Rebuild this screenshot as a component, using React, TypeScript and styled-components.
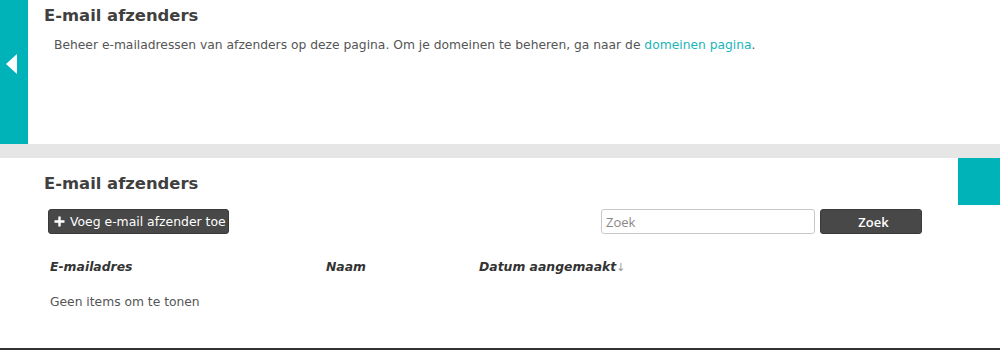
import React from 'react'
import styled, { createGlobalStyle } from 'styled-components'

const GlobalStyle = createGlobalStyle`
  html, body {
    margin: 0;
    padding: 0;
    background: #fff;
  }
  body {
    font-family: "DejaVu Sans", Verdana, sans-serif;
    color: #444;
  }
`

const Page = styled.div`
  width: 1000px;
  height: 350px;
  display: flex;
  flex-direction: column;
  overflow: hidden;
  background: #fff;
  border-bottom: 2px solid #333;
  box-sizing: border-box;
`

const TopPanel = styled.section`
  height: 144px;
  display: flex;
`

const SideTab = styled.div`
  width: 28px;
  flex: none;
  background: #00b3b8;
  display: flex;
  align-items: center;
  justify-content: flex-start;
  padding-left: 6px;
  padding-bottom: 16px;
  box-sizing: border-box;
`

const Arrow = styled.span`
  width: 0;
  height: 0;
  border-top: 10px solid transparent;
  border-bottom: 10px solid transparent;
  border-right: 11px solid #fff;
`

const TopBody = styled.div`
  padding: 6px 0 0 16px;
`

const Title = styled.h2`
  margin: 0;
  font-size: 16.4px;
  font-weight: bold;
  color: #404040;
  line-height: 20px;
`

const Intro = styled.p`
  margin: 11px 0 0 10px;
  font-size: 12.3px;
  color: #555;
  line-height: 16px;
`

const Link = styled.a`
  color: #22b5b8;
  text-decoration: none;
`

const Divider = styled.div`
  height: 14px;
  background: #e6e6e6;
  flex: none;
`

const BottomPanel = styled.section`
  flex: 1;
  display: flex;
  align-items: flex-start;
`

const BottomBody = styled.div`
  flex: 1;
  padding: 16px 0 0 44px;
`

const CornerTab = styled.div`
  width: 42px;
  height: 47px;
  flex: none;
  background: #00b3b8;
`

const Toolbar = styled.div`
  display: flex;
  align-items: center;
  margin: 15px 0 0 4px;
  width: 874px;
`

const DarkButton = styled.button<{ $width?: number; $bold?: boolean }>`
  height: 25px;
  width: ${({ $width }) => ($width ? `${$width}px` : 'auto')};
  display: inline-flex;
  align-items: center;
  justify-content: center;
  gap: 5px;
  padding: 0 ${({ $width }) => ($width ? 0 : 2)}px 0 5px;
  background: #484848;
  color: #fff;
  border: 1px solid #3a3a3a;
  border-radius: 3px;
  font-family: ${({ $bold }) => ($bold ? '"Open Sans", sans-serif' : '"DejaVu Sans", sans-serif')};
  font-size: ${({ $bold }) => ($bold ? 13 : 12.4)}px;
  font-weight: ${({ $bold }) => ($bold ? 600 : 'normal')};
  box-sizing: border-box;
  cursor: pointer;
`

const Plus = styled.svg`
  width: 11px;
  height: 11px;
`

const Spacer = styled.div`
  flex: 1;
`

const SearchInput = styled.input`
  width: 214px;
  height: 25px;
  box-sizing: border-box;
  border: 1px solid #c8c8c8;
  border-radius: 3px;
  padding: 0 4px;
  font-family: "Open Sans", sans-serif;
  font-size: 13px;
  color: #444;
  margin-right: 5px;

  &::placeholder {
    color: #888;
  }
`

const Table = styled.div`
  margin: 25px 0 0 6px;
  width: 640px;
`

const HeaderRow = styled.div`
  display: grid;
  grid-template-columns: 276px 153px 1fr;
`

const HeaderCell = styled.div`
  font-size: 12.4px;
  font-weight: bold;
  font-style: italic;
  color: #333;
  line-height: 16px;
  white-space: nowrap;
`

const SortMark = styled.span`
  font-style: normal;
  font-weight: normal;
  color: #999;
  font-size: 11px;
`

const Empty = styled.div`
  margin-top: 18px;
  font-size: 12.3px;
  color: #555;
  line-height: 16px;
`

export default function App() {
  return (
    <>
      <GlobalStyle />
      <Page>
        <TopPanel>
          <SideTab>
            <Arrow />
          </SideTab>
          <TopBody>
            <Title>E-mail afzenders</Title>
            <Intro>
              Beheer e-mailadressen van afzenders op deze pagina. Om je domeinen te beheren, ga
              naar de <Link href="#">domeinen pagina</Link>.
            </Intro>
          </TopBody>
        </TopPanel>
        <Divider />
        <BottomPanel>
          <BottomBody>
            <Title>E-mail afzenders</Title>
            <Toolbar>
              <DarkButton>
                <Plus viewBox="0 0 11 11">
                  <path d="M5.5 0.5v10M0.5 5.5h10" stroke="#fff" strokeWidth="2.4" />
                </Plus>
                Voeg e-mail afzender toe
              </DarkButton>
              <Spacer />
              <SearchInput placeholder="Zoek" />
              <DarkButton $width={102} $bold>
                Zoek
              </DarkButton>
            </Toolbar>
            <Table>
              <HeaderRow>
                <HeaderCell>E-mailadres</HeaderCell>
                <HeaderCell>Naam</HeaderCell>
                <HeaderCell>
                  Datum aangemaakt<SortMark>↓</SortMark>
                </HeaderCell>
              </HeaderRow>
              <Empty>Geen items om te tonen</Empty>
            </Table>
          </BottomBody>
          <CornerTab />
        </BottomPanel>
      </Page>
    </>
  )
}
